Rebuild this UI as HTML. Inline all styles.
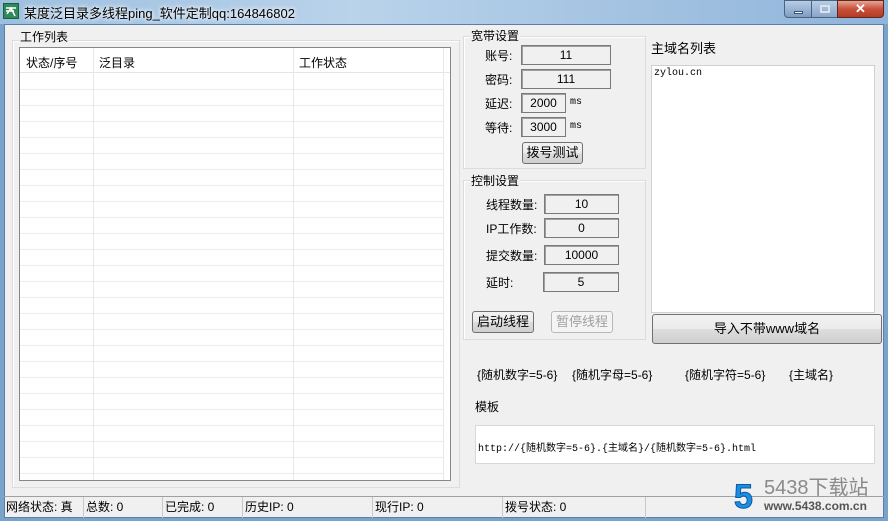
<!DOCTYPE html>
<html><head><meta charset="utf-8"><style>
*{box-sizing:border-box;margin:0;padding:0}
body{width:888px;height:521px;overflow:hidden;background:#7aa3cc;font-family:"Liberation Sans","Noto Sans CJK SC","WenQuanYi Zen Hei",sans-serif;font-size:12px;color:#000;position:relative}
.a{position:absolute}
#title{left:0;top:0;width:888px;height:24px;background:linear-gradient(90deg,#9dbfe0,#b9d3ea 40%,#a4c3e2 70%,#8fb4da);}
#body{left:4px;top:24px;width:880px;height:494px;background:#f0f0f0;border:1px solid #5a7fa8}
.grp{border:1px solid #dcdcdc;box-shadow:inset 1px 1px 0 #fff}
.lbl{background:#f0f0f0;padding:0 1px;font-size:12px;white-space:nowrap}
.inp{background:#f0f0f0;border:1px solid #7a7a7a;box-shadow:inset 1px 1px 0 #a0a0a0;text-align:center;font-size:12px;line-height:18px}
.btn{border:1px solid #707070;border-radius:3px;background:linear-gradient(#f2f2f2,#ebebeb 50%,#dddddd 51%,#cfcfcf);text-align:center;font-size:12px}
.mono{font-family:"Liberation Mono","Noto Sans CJK SC",monospace;font-size:10px}
.sb{top:497px;height:21px;line-height:21px;border-right:1px solid #c8c8c8;padding-left:2px;font-size:12px;white-space:nowrap}
</style></head><body>
<div id="title" class="a"></div>
<div class="a" style="left:3px;top:3px;width:16px;height:16px;background:#2f8a5a;border:1px solid #1b5e3b"><svg width="14" height="14"><path d="M2 4h10M2 7h8M3 10l4-6 4 8" stroke="#fff" stroke-width="1.5" fill="none"/></svg></div>
<div class="a" style="left:24px;top:3px;font-size:13px;color:#000;text-shadow:0 0 6px #fff,0 0 4px #fff">某度泛目录多线程ping_软件定制qq:164846802</div>
<div class="a" style="left:784px;top:0;width:28px;height:18px;border:1px solid #4a6284;border-radius:0 0 0 4px;background:linear-gradient(#b8cde4,#7e9cc2)"><div class="a" style="left:9px;top:10px;width:9px;height:3px;background:#fff;border:1px solid #3b4f6e"></div></div>
<div class="a" style="left:811px;top:0;width:27px;height:18px;border:1px solid #4a6284;background:linear-gradient(#b8cde4,#8aa5c8)"><div class="a" style="left:8px;top:4px;width:10px;height:8px;border:2px solid #d8e2ee"></div></div>
<div class="a" style="left:837px;top:0;width:47px;height:18px;border:1px solid #5a2a20;border-radius:0 0 4px 0;background:linear-gradient(#e8a493,#c7503a 50%,#b53a22);color:#fff;font-weight:bold;text-align:center;font-size:13px;line-height:16px">✕</div>
<div id="body" class="a"></div>

<div class="a grp" style="left:12px;top:40px;width:448px;height:448px"></div>
<div class="a lbl" style="left:19px;top:28px">工作列表</div>
<div class="a" style="left:19px;top:47px;width:432px;height:434px;background:#fff;border:1px solid #828790;overflow:hidden">
 <div class="a" style="left:0;top:26px;width:424px;height:408px;background:repeating-linear-gradient(#fff 0 15px,#ececec 15px 16px)"></div>
 <div class="a" style="left:0;top:0;width:430px;height:25px;border-bottom:1px solid #e5e5e5"></div>
 <div class="a" style="left:6px;top:6px">状态/序号</div>
 <div class="a" style="left:79px;top:6px">泛目录</div>
 <div class="a" style="left:279px;top:6px">工作状态</div>
 <div class="a" style="left:73px;top:0;width:1px;height:434px;background:#e8e8e8"></div>
 <div class="a" style="left:273px;top:0;width:1px;height:434px;background:#e8e8e8"></div>
 <div class="a" style="left:423px;top:0;width:1px;height:434px;background:#e8e8e8"></div>
</div>

<div class="a grp" style="left:463px;top:36px;width:183px;height:133px"></div>
<div class="a lbl" style="left:470px;top:27px">宽带设置</div>
<div class="a" style="left:485px;top:47px">账号:</div><div class="a inp" style="left:521px;top:45px;width:90px;height:20px">11</div>
<div class="a" style="left:485px;top:71px">密码:</div><div class="a inp" style="left:521px;top:69px;width:90px;height:20px">111</div>
<div class="a" style="left:485px;top:95px">延迟:</div><div class="a inp" style="left:521px;top:93px;width:45px;height:20px">2000</div><div class="a mono" style="left:570px;top:97px">ms</div>
<div class="a" style="left:485px;top:119px">等待:</div><div class="a inp" style="left:521px;top:117px;width:45px;height:20px">3000</div><div class="a mono" style="left:570px;top:121px">ms</div>
<div class="a btn" style="left:522px;top:142px;width:61px;height:22px;line-height:20px;font-size:13px">拨号测试</div>

<div class="a grp" style="left:463px;top:180px;width:183px;height:160px"></div>
<div class="a lbl" style="left:470px;top:172px">控制设置</div>
<div class="a" style="left:486px;top:196px">线程数量:</div><div class="a inp" style="left:544px;top:194px;width:75px;height:20px">10</div>
<div class="a" style="left:486px;top:220px">IP工作数:</div><div class="a inp" style="left:544px;top:218px;width:75px;height:20px">0</div>
<div class="a" style="left:486px;top:247px">提交数量:</div><div class="a inp" style="left:544px;top:245px;width:75px;height:20px">10000</div>
<div class="a" style="left:486px;top:274px">延时:</div><div class="a inp" style="left:543px;top:272px;width:76px;height:20px">5</div>
<div class="a btn" style="left:472px;top:311px;width:62px;height:22px;line-height:20px;font-size:13px">启动线程</div>
<div class="a btn" style="left:551px;top:311px;width:62px;height:22px;line-height:20px;font-size:13px;color:#a0a0a0;border-color:#b8b8b8;background:#f4f4f4">暂停线程</div>

<div class="a" style="left:651px;top:38px;font-size:13px">主域名列表</div>
<div class="a" style="left:651px;top:65px;width:224px;height:248px;background:#fff;border:1px solid #d0d0d0"></div>
<div class="a mono" style="left:654px;top:68px">zylou.cn</div>
<div class="a btn" style="left:652px;top:314px;width:230px;height:30px;line-height:28px;font-size:13px">导入不带www域名</div>

<div class="a" style="left:477px;top:366px">{随机数字=5-6}</div>
<div class="a" style="left:572px;top:366px">{随机字母=5-6}</div>
<div class="a" style="left:685px;top:366px">{随机字符=5-6}</div>
<div class="a" style="left:789px;top:366px">{主域名}</div>
<div class="a" style="left:475px;top:398px">模板</div>
<div class="a" style="left:475px;top:425px;width:400px;height:39px;background:#fff;border:1px solid #d8d8d8"></div>
<div class="a mono" style="left:478px;top:439px">http://{随机数字=5-6}.{主域名}/{随机数字=5-6}.html</div>

<div class="a" style="left:4px;top:496px;width:880px;height:1px;background:#a0a0a0"></div>
<div class="a sb" style="left:4px;width:80px">网络状态: 真</div>
<div class="a sb" style="left:84px;width:79px">总数: 0</div>
<div class="a sb" style="left:163px;width:80px">已完成: 0</div>
<div class="a sb" style="left:243px;width:130px">历史IP: 0</div>
<div class="a sb" style="left:373px;width:130px">现行IP: 0</div>
<div class="a sb" style="left:503px;width:143px">拨号状态: 0</div>

<div class="a" style="left:734px;top:480px;font-size:34px;font-weight:bold;color:#1a8ee0;font-family:'Liberation Sans',sans-serif;line-height:34px;-webkit-text-stroke:1px #0b5aa8">5</div>
<div class="a" style="left:764px;top:478px;font-size:20px;color:#8a8a8a;line-height:20px">5438下载站</div>
<div class="a" style="left:764px;top:499px;font-size:12px;color:#555;font-weight:bold;line-height:14px">www.5438.com.cn</div>
</body></html>
